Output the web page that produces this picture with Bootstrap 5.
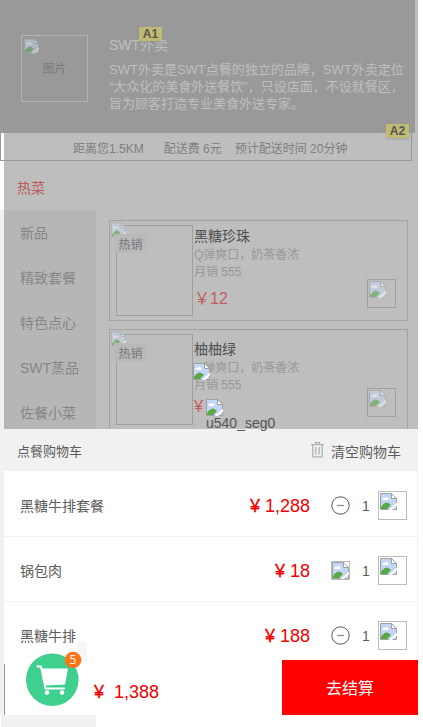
<!DOCTYPE html>
<html lang="zh-CN">
<head>
<meta charset="utf-8">
<meta name="viewport" content="width=device-width, initial-scale=1">
<title>SWT外卖</title>
<link href="https://cdn.jsdelivr.net/npm/bootstrap@5.3.0/dist/css/bootstrap.min.css" rel="stylesheet">
<style>
body{font-family:"Liberation Sans","Noto Sans CJK SC",sans-serif;font-size:14px;line-height:1;color:#5c5c5c;background:#fff;overflow:hidden}
.phone{width:418px;height:727px;background:linear-gradient(90deg,#f1f1f1 4px,#fff 4px)}
.shade{height:429px;background:linear-gradient(90deg,transparent 4px,#bebebe 4px)}
.shop{width:415px;height:133px;background:#999;color:#bfbfbf;padding:35px 0 0 21px;gap:21px}
.logo-box{width:67px;height:67px;border:1px solid #b3b3b3;color:#7c7c7c;font-size:12px}
.logo-box .broken{top:2px;left:2px;opacity:.5}
.shop-name{line-height:16px;padding-top:2px}
.shop-text{font-size:13px;line-height:17px;padding-top:8px}
.tag{background:#bfbb72;color:#555;font-size:12px;height:14px;line-height:14px;width:23px;box-shadow:0 1px 2px #8888}
.tag-a{left:139px;top:27px}
.tag-b{left:386px;top:124px}
.info{width:412px;height:28px;border:1px solid #999;border-top:0;font-size:12px;color:#7f7f7f;padding-left:72px;padding-top:4px;background:linear-gradient(90deg,#fff 3px,#bebebe 3px)}
.info .eta{padding-left:1px}
.section-name{height:49px;padding:4px 0 0 17px;color:#bd5a5a;background:linear-gradient(90deg,#fff 4px,transparent 4px)}
.body-row{height:219px;padding-left:4px;overflow:hidden}
.side{width:92px;background:#b6b6b6;color:#868686}
.side a{height:45px;flex:none;padding:1px 0 0 16px;color:inherit}
.dishes{padding:10px 0 0 13px;gap:8px}
.dish{width:299px;height:101px;border:1px solid #a2a2a2;padding:4px 0 0 6px}
.thumb{width:77px;height:91px;border:1px solid #a0a0a0;margin-right:1px}
.label{left:4px;top:13px;width:33px;height:19px;background:#b9b9b9;color:#777;font-size:12px;padding-top:2px}
.dish>.broken{left:1px;top:1px;opacity:.5}
.dish-name{color:#505050;line-height:20px;padding:1px 0}
.dish-text{font-size:12px;line-height:17px;color:#999}
.dish-price{font-size:16px;color:#c25c5c;line-height:20px;margin-top:8px}
.dish.low .dish-name{padding-top:5px}
.dish.low .dish-price{margin-top:3px}
.pic{width:29px;height:29px;border:1px solid #a0a0a0;padding:1px}
.dish .pic{right:11px;bottom:12px}
.dish .pic svg{opacity:.55}
.loose-a{left:193px;top:363px}
.loose-b{left:206px;top:399px}
.loose-name{left:206px;top:415px;line-height:16px;color:#555}
.cart-head{height:42px;background:#f1f1f1;padding:3px 17px 0 17px}
.cart-head .ttl{font-size:13px}
.cart-head .clear{padding:1px 0 0 7px}
.cart-list{margin-left:4px;border-right:1px solid #f0f0f0;height:189px;overflow:hidden}
.cart-row{height:65px;flex:none;padding:3px 10px 0 16px}
.cart-row+.cart-row{border-top:1px solid #f0f0f0}
.cart-row:first-child{padding-top:4px}
.cost{font-size:18px;color:#f00000;margin-right:21px}
.yen{-webkit-text-stroke:.3px currentColor}
.qty{width:8px;margin:0 8px 0 12px}
.cart-row .pic,.mini{border:1px solid #bbb}
.cart-row .step{width:19px;height:19px}
.cart-row .step:not(.mini){margin-top:-1px}
.pay{height:55px}
.pay .total{margin-left:4px;width:278px}
.pay .total::before{content:"";width:1px;height:51px;background:#999;align-self:flex-end}
.total-cost{font-size:18px;color:#f00000;margin-left:89px;padding-top:8px;white-space:pre}
.go{width:136px;background:#f00;color:#fff;font-size:16px;border:0;padding-top:4px}
.foot-end{height:12px;background:#fff}
.tail{width:95px;height:12px;margin-left:1px;background:#f1f1f1}
.bag{left:25px;top:642px}
</style>
<script src="https://cdn.jsdelivr.net/npm/bootstrap@5.3.0/dist/js/bootstrap.bundle.min.js"></script>
</head>
<body>
<svg class="d-none">
  <symbol id="img" viewBox="0 0 17 17">
    <path d="M.5.500H11.500L16.500 5.500V16.500H.5Z" fill="#c3d6f5" stroke="#a0a0a0"/>
    <path d="M2.500 7C2 5 4 4 5.200 5C6 3.200 9 4 8.500 7Z" fill="#fff"/>
    <path d="M1 16V14Q6 6 11 12L7 16Z" fill="#58a844"/>
    <path d="M8.500 17L17 9.500V12.500L12 17Z" fill="#fff"/>
    <path d="M11.500.5V5.500H16.500Z" fill="#fff" stroke="#a0a0a0"/>
  </symbol>
  <symbol id="minus" viewBox="0 0 19 19">
    <circle cx="9.500" cy="9.500" r="8.700" fill="#fff" stroke="#555" stroke-width="1"/>
    <path d="M6 9.500H13" stroke="#888" stroke-width="1.200"/>
  </symbol>
</svg>
<main class="phone position-relative overflow-hidden">
  <section class="shade">
    <header class="shop d-flex align-items-start">
      <div class="logo-box position-relative d-flex align-items-center justify-content-center flex-shrink-0">
        <svg class="broken position-absolute" width="15" height="16"><use href="#img"/></svg>图片
      </div>
      <div class="text-nowrap">
        <div class="shop-name">SWT外卖</div>
        <div class="shop-text">SWT外卖是SWT点餐的独立的品牌，SWT外卖定位<br>“大众化的美食外送餐饮”，只设店面，不设就餐区，<br>旨为顾客打造专业美食外送专家。</div>
      </div>
    </header>
    <div class="info d-flex align-items-center text-nowrap"><span class="pe-3 me-1">距离您1.5KM</span><span class="pe-2 me-1">配送费 6元</span><span class="eta">预计配送时间 20分钟</span></div>
    <div class="section-name d-flex align-items-center">热菜</div>
    <div class="body-row d-flex">
      <nav class="side d-flex flex-column flex-shrink-0">
        <a class="d-flex align-items-center text-decoration-none">新品</a>
        <a class="d-flex align-items-center text-decoration-none">精致套餐</a>
        <a class="d-flex align-items-center text-decoration-none">特色点心</a>
        <a class="d-flex align-items-center text-decoration-none">SWT蒸品</a>
        <a class="d-flex align-items-center text-decoration-none">佐餐小菜</a>
      </nav>
      <div class="dishes d-flex flex-column">
        <article class="dish d-flex position-relative flex-shrink-0">
          <svg class="broken position-absolute" width="15" height="16"><use href="#img"/></svg>
          <div class="thumb flex-shrink-0"></div>
          <span class="label position-absolute d-flex align-items-center justify-content-center">热销</span>
          <div class="text-nowrap">
            <div class="dish-name">黑糖珍珠</div>
            <div class="dish-text">Q弹爽口，奶茶香浓</div>
            <div class="dish-text">月销 555</div>
            <div class="dish-price">￥12</div>
          </div>
          <div class="pic position-absolute"><svg class="d-block" width="17" height="17"><use href="#img"/></svg></div>
        </article>
        <article class="dish low d-flex position-relative flex-shrink-0">
          <svg class="broken position-absolute" width="15" height="16"><use href="#img"/></svg>
          <div class="thumb flex-shrink-0"></div>
          <span class="label position-absolute d-flex align-items-center justify-content-center">热销</span>
          <div class="text-nowrap">
            <div class="dish-name">柚柚绿</div>
            <div class="dish-text">Q弹爽口，奶茶香浓</div>
            <div class="dish-text">月销 555</div>
            <div class="dish-price">¥</div>
          </div>
          <div class="pic position-absolute"><svg class="d-block" width="17" height="17"><use href="#img"/></svg></div>
        </article>
      </div>
    </div>
  </section>
  <span class="tag tag-a position-absolute text-center fw-bold">A1</span>
  <span class="tag tag-b position-absolute text-center fw-bold">A2</span>
  <svg class="loose-a position-absolute" width="17" height="17"><use href="#img"/></svg>
  <svg class="loose-b position-absolute" width="17" height="17"><use href="#img"/></svg>
  <span class="loose-name position-absolute">u540_seg0</span>
  <section>
    <div class="cart-head d-flex align-items-center">
      <span class="ttl me-auto">点餐购物车</span>
      <svg class="mb-1" width="13" height="16" viewBox="0 0 13 16" fill="none" stroke="#aab4b6" stroke-width="1.300"><path d="M0 2.600H13M4.500 2.500V.7H8.500V2.500M1.800 2.600V14.800H11.200V2.600M4.800 5V12.500M8.200 5V12.500"/></svg>
      <span class="clear">清空购物车</span>
    </div>
    <div class="cart-list d-flex flex-column">
      <div class="cart-row d-flex align-items-center">
        <span class="me-auto">黑糖牛排套餐</span><span class="cost"><span class="yen">¥</span> 1,288</span>
        <svg class="step"><use href="#minus"/></svg><span class="qty">1</span>
        <div class="pic"><svg class="d-block" width="17" height="17"><use href="#img"/></svg></div>
      </div>
      <div class="cart-row d-flex align-items-center">
        <span class="me-auto">锅包肉</span><span class="cost"><span class="yen">¥</span> 18</span>
        <svg class="step mini"><use href="#img"/></svg><span class="qty">1</span>
        <div class="pic"><svg class="d-block" width="17" height="17"><use href="#img"/></svg></div>
      </div>
      <div class="cart-row d-flex align-items-center">
        <span class="me-auto">黑糖牛排</span><span class="cost"><span class="yen">¥</span> 188</span>
        <svg class="step"><use href="#minus"/></svg><span class="qty">1</span>
        <div class="pic"><svg class="d-block" width="17" height="17"><use href="#img"/></svg></div>
      </div>
    </div>
  </section>
  <footer>
    <div class="pay d-flex">
      <div class="total d-flex align-items-center"><span class="total-cost"><span class="yen">¥</span>  1,388</span></div>
      <button class="go d-flex align-items-center justify-content-center">去结算</button>
    </div>
    <div class="foot-end"><div class="tail"></div></div>
  </footer>
  <svg class="bag position-absolute" width="62" height="66" viewBox="0 0 62 66">
    <path d="M52 0H62V20H52Z" fill="#f7f7f7"/>
    <circle cx="27.300" cy="37.700" r="26.300" fill="#3fcf8e"/>
    <path d="M12.500 24.500H16L20.500 46.500H39" fill="none" stroke="#fff" stroke-width="2" stroke-linecap="round" stroke-linejoin="round"/>
    <path d="M17 26.500H43L40 42.500L20 43.500Z" fill="#fff"/>
    <circle cx="22" cy="50.500" r="2.300" fill="#fff"/><circle cx="37" cy="50.500" r="2.300" fill="#fff"/>
    <circle cx="48" cy="18" r="8.300" fill="#ff7417"/>
    <text x="48" y="22.300" text-anchor="middle" font-size="12" fill="#fff" font-family="Open Sans,sans-serif">5</text>
  </svg>
</main>
</body>
</html>
